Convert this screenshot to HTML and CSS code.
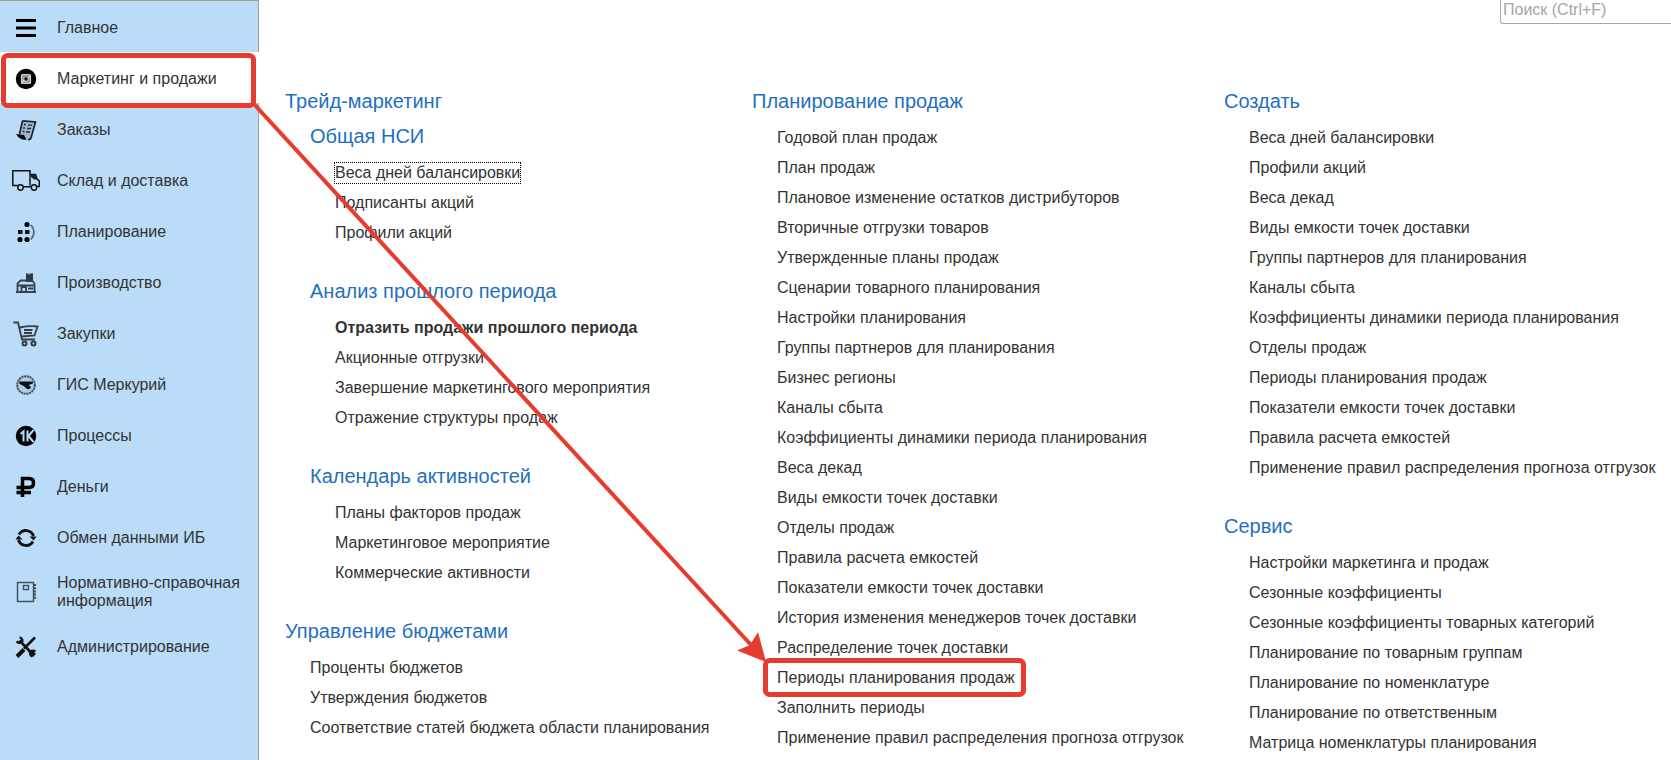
FILE: index.html
```html
<!DOCTYPE html>
<html lang="ru">
<head>
<meta charset="utf-8">
<title>Маркетинг и продажи</title>
<link rel="stylesheet" href="styles.css">
</head>
<body>
<div class="app">
  <nav class="sidebar" aria-label="Разделы">
    <a class="section" href="#"><svg class="icon" viewBox="0 0 28 28"><path d="M4 6.500h20M4 14h20M4 21.500h20" stroke="#000" stroke-width="3"/></svg><span>Главное</span></a>
    <a class="section section-active" href="#" aria-current="page"><svg class="icon" viewBox="0 0 28 28"><circle cx="14" cy="14" r="10.200" fill="#000"/><rect x="9.500" y="9.500" width="9" height="9" rx="1" fill="#999" stroke="#ccc" stroke-width="1.200"/><path d="M10 17.800l2-3 2 2 4-6" fill="none" stroke="#eee"/><circle cx="14" cy="14" r="1.700" fill="#111"/></svg><span>Маркетинг и продажи</span></a>
    <a class="section" href="#"><svg class="icon" viewBox="0 0 28 28"><path d="M10.500 5L23.500 6L18.500 23.500L14 23.500L5 19.500L8 17.500Z" fill="#9db7cc"/><path d="M10.500 4.800L23.500 6L19 22Q18 24 16 23.500M10.500 5L7.500 18" fill="none" stroke="#1a2229" stroke-width="1.700"/><path d="M4 18L12 19L14.500 23.800Q8 24.500 4 18Z" fill="#000"/><path d="M12 8.500h2M16 9.200h4M11 12h2M15 12.500h4M10.500 15.500h2M14 16h4" stroke="#202a33" stroke-width="1.300"/></svg><span>Заказы</span></a>
    <a class="section" href="#"><svg class="icon" viewBox="0 0 28 28"><path d="M5.500 18.500H.8V3.800H18V18.500M18 7.500H23.500L25 12L27.300 14V19.500H25M11 19.800H19" fill="none" stroke="#111" stroke-width="1.500"/><path d="M19 8h4.500l1.200 4.500h-2.700l-3-2.500z" fill="#222"/><circle cx="8.500" cy="20.500" r="2.700" fill="#badcf8" stroke="#111" stroke-width="1.500"/><circle cx="22" cy="20.500" r="2.700" fill="#badcf8" stroke="#111" stroke-width="1.500"/></svg><span>Склад и доставка</span></a>
    <a class="section" href="#"><svg class="icon" viewBox="0 0 28 28"><path d="M6 12h4.500v4H6zM13 12h4.500v4H13z" fill="#111"/><circle cx="15" cy="6.500" r="2.600"/><circle cx="8" cy="21.500" r="2.600"/><circle cx="15" cy="21.500" r="2.600"/><path d="M19 7Q25 14 19 21.500" fill="none" stroke="#566775" stroke-width="1.800"/></svg><span>Планирование</span></a>
    <a class="section" href="#"><svg class="icon" viewBox="0 0 28 28"><path d="M14 4.500h2.500v1h1v-1H21V13H14z" fill="#2c3945"/><path d="M5.500 23V14.500L8.500 11.500H20L22.500 14.500V23M4 23H24M5.500 16.500H22.500M9.500 23V18H14V23M16 19.500H21" fill="none" stroke="#33414e" stroke-width="1.800"/></svg><span>Производство</span></a>
    <a class="section" href="#"><svg class="icon" viewBox="0 0 28 28"><path d="M1.500 2.500H6L10 19.500H23M8 7.500Q17 5.500 25.500 6.500L22.500 15.500L9.500 16.500M12 10H20.500M12 13H20" fill="none" stroke="#343f49" stroke-width="1.800"/><circle cx="12.500" cy="23.500" r="2" fill="none" stroke="#303a43" stroke-width="2"/><circle cx="21.500" cy="23.500" r="2" fill="none" stroke="#303a43" stroke-width="2"/></svg><span>Закупки</span></a>
    <a class="section" href="#"><svg class="icon" viewBox="0 0 28 28"><circle cx="14" cy="14" r="8.800" fill="#b0cde5" stroke="#46545f" stroke-width="2" stroke-dasharray="2.200 .6"/><path d="M7 10.500H21L20.500 13Q17.500 12.500 17 15L19 15.500L18 18H15Q12 14.500 7.500 13Z" fill="#0b1116"/></svg><span>ГИС Меркурий</span></a>
    <a class="section" href="#"><svg class="icon" viewBox="0 0 28 28"><circle cx="14" cy="14" r="10.200" fill="#000"/><path d="M8.500 12L11.500 9.500V19.500M15.500 8.500V19.500M21.500 8L16.500 14L21.500 20" fill="none" stroke="#badcf8" stroke-width="2"/></svg><span>Процессы</span></a>
    <a class="section" href="#"><svg class="icon" viewBox="0 0 28 28"><path d="M10.500 24V5.500H17Q21.500 5.500 21.500 10T17 14.500H4.500M4.500 19.500H19" fill="none" stroke="#000" stroke-width="3.500"/></svg><span>Деньги</span></a>
    <a class="section" href="#"><svg class="icon" viewBox="0 0 28 28"><path d="M7 10.500A8 8 0 0 1 21.500 12M21 17.500A8 8 0 0 1 6.500 16" fill="none" stroke="#111" stroke-width="2.800"/><path d="M17.500 12.500H24.500L21.500 16.500ZM3.500 15.500H10.500L6.500 11.500Z" fill="#111"/></svg><span>Обмен данными ИБ</span></a>
    <a class="section" href="#"><svg class="icon" viewBox="0 0 28 28"><rect x="5.500" y="4.500" width="16" height="19" fill="none" stroke="#3f4c58" stroke-width="1.400"/><rect x="11.500" y="7.500" width="5" height="4" fill="none" stroke="#3f4c58" stroke-width="1.400"/><path d="M22.500 6V21" stroke="#3f4c58" stroke-width="3" stroke-dasharray="2 1.200"/></svg><span>Нормативно-справочная информация</span></a>
    <a class="section" href="#"><svg class="icon" viewBox="0 0 28 28"><path d="M7.500 7.500L19 19.500M12 15.500L23 4.500" stroke="#111" stroke-width="2.600"/><path d="M18 18L22.500 22.500M5 23.500L12 16.500" stroke="#111" stroke-width="4"/><path d="M4.500 8.500Q8.500 11.500 10.500 8Q10.500 5 7.500 4.500M23.500 18.500Q20 16.500 18 19.500Q18 23 20.500 23.500" fill="none" stroke="#111" stroke-width="2.200"/></svg><span>Администрирование</span></a>
  </nav>

  <main class="content">
    <form class="search">
      <input class="search-input" type="search" placeholder="Поиск (Ctrl+F)" aria-label="Поиск">
    </form>
    <div class="columns">
      <div class="column">
        <section class="group">
          <h2 class="title title-parent">Трейд-маркетинг</h2>
          <div class="subgroups">
            <section class="group">
              <h3 class="title">Общая НСИ</h3>
              <ul class="links">
                <li><a class="link link-focused" href="#">Веса дней балансировки</a></li>
                <li><a class="link" href="#">Подписанты акций</a></li>
                <li><a class="link" href="#">Профили акций</a></li>
              </ul>
            </section>
            <section class="group">
              <h3 class="title">Анализ прошлого периода</h3>
              <ul class="links">
                <li><a class="link link-strong" href="#">Отразить продажи прошлого периода</a></li>
                <li><a class="link" href="#">Акционные отгрузки</a></li>
                <li><a class="link" href="#">Завершение маркетингового мероприятия</a></li>
                <li><a class="link" href="#">Отражение структуры продаж</a></li>
              </ul>
            </section>
            <section class="group">
              <h3 class="title">Календарь активностей</h3>
              <ul class="links">
                <li><a class="link" href="#">Планы факторов продаж</a></li>
                <li><a class="link" href="#">Маркетинговое мероприятие</a></li>
                <li><a class="link" href="#">Коммерческие активности</a></li>
              </ul>
            </section>
          </div>
        </section>
        <section class="group">
          <h2 class="title">Управление бюджетами</h2>
          <ul class="links">
            <li><a class="link" href="#">Проценты бюджетов</a></li>
            <li><a class="link" href="#">Утверждения бюджетов</a></li>
            <li><a class="link" href="#">Соответствие статей бюджета области планирования</a></li>
          </ul>
        </section>
      </div>
      <div class="column">
        <section class="group">
          <h2 class="title">Планирование продаж</h2>
          <ul class="links">
            <li><a class="link" href="#">Годовой план продаж</a></li>
            <li><a class="link" href="#">План продаж</a></li>
            <li><a class="link" href="#">Плановое изменение остатков дистрибуторов</a></li>
            <li><a class="link" href="#">Вторичные отгрузки товаров</a></li>
            <li><a class="link" href="#">Утвержденные планы продаж</a></li>
            <li><a class="link" href="#">Сценарии товарного планирования</a></li>
            <li><a class="link" href="#">Настройки планирования</a></li>
            <li><a class="link" href="#">Группы партнеров для планирования</a></li>
            <li><a class="link" href="#">Бизнес регионы</a></li>
            <li><a class="link" href="#">Каналы сбыта</a></li>
            <li><a class="link" href="#">Коэффициенты динамики периода планирования</a></li>
            <li><a class="link" href="#">Веса декад</a></li>
            <li><a class="link" href="#">Виды емкости точек доставки</a></li>
            <li><a class="link" href="#">Отделы продаж</a></li>
            <li><a class="link" href="#">Правила расчета емкостей</a></li>
            <li><a class="link" href="#">Показатели емкости точек доставки</a></li>
            <li><a class="link" href="#">История изменения менеджеров точек доставки</a></li>
            <li><a class="link" href="#">Распределение точек доставки</a></li>
            <li><a class="link" href="#">Периоды планирования продаж</a></li>
            <li><a class="link" href="#">Заполнить периоды</a></li>
            <li><a class="link" href="#">Применение правил распределения прогноза отгрузок</a></li>
          </ul>
        </section>
      </div>
      <div class="column">
        <section class="group">
          <h2 class="title">Создать</h2>
          <ul class="links">
            <li><a class="link" href="#">Веса дней балансировки</a></li>
            <li><a class="link" href="#">Профили акций</a></li>
            <li><a class="link" href="#">Веса декад</a></li>
            <li><a class="link" href="#">Виды емкости точек доставки</a></li>
            <li><a class="link" href="#">Группы партнеров для планирования</a></li>
            <li><a class="link" href="#">Каналы сбыта</a></li>
            <li><a class="link" href="#">Коэффициенты динамики периода планирования</a></li>
            <li><a class="link" href="#">Отделы продаж</a></li>
            <li><a class="link" href="#">Периоды планирования продаж</a></li>
            <li><a class="link" href="#">Показатели емкости точек доставки</a></li>
            <li><a class="link" href="#">Правила расчета емкостей</a></li>
            <li><a class="link" href="#">Применение правил распределения прогноза отгрузок</a></li>
          </ul>
        </section>
        <section class="group">
          <h2 class="title">Сервис</h2>
          <ul class="links">
            <li><a class="link" href="#">Настройки маркетинга и продаж</a></li>
            <li><a class="link" href="#">Сезонные коэффициенты</a></li>
            <li><a class="link" href="#">Сезонные коэффициенты товарных категорий</a></li>
            <li><a class="link" href="#">Планирование по товарным группам</a></li>
            <li><a class="link" href="#">Планирование по номенклатуре</a></li>
            <li><a class="link" href="#">Планирование по ответственным</a></li>
            <li><a class="link" href="#">Матрица номенклатуры планирования</a></li>
          </ul>
        </section>
      </div>
    </div>
  </main>

  <svg class="annotation" width="1040" height="700" viewBox="0 0 1040 700" aria-hidden="true">
    <g fill="none" stroke="#e63c2f" stroke-width="5">
      <rect x="3.500" y="55.500" width="250" height="50" rx="4"/>
      <rect x="765.500" y="660.500" width="258" height="34" rx="4"/>
      <path d="M254 104L752 646" stroke-width="4"/>
    </g>
    <path d="M766 662L737 650.500L750 645L758 632Z" fill="#e63c2f"/>
  </svg>
</div>
</body>
</html>
```
FILE: styles.css
```css
* {
  box-sizing: border-box;
}

body {
  margin: 0;
  background: #fff;
  color: #333;
  font: 16px/18px "Liberation Sans", Arial, sans-serif;
}

.app {
  position: relative;
  display: flex;
  min-height: 100vh;
  overflow: hidden;
}

.sidebar {
  flex: none;
  width: 259px;
  border-top: 1px solid #a0a0a0;
  border-right: 1px solid #a0a0a0;
  background: #badcf8;
}

.section {
  display: flex;
  align-items: center;
  gap: 17px;
  min-height: 51px;
  padding: 12px 12px 10px;
  color: #333;
  text-decoration: none;
}

.section-active {
  margin-right: -1px;
  background: #fff;
}

.icon {
  flex: none;
  width: 28px;
  height: 28px;
}

.content {
  flex: 1;
  min-width: 0;
}

.search {
  display: flex;
  justify-content: flex-end;
}

.search-input {
  width: 171px;
  height: 24px;
  padding: 0 2px 4px;
  border: solid #a8a8a8;
  border-width: 0 0 1px 1px;
  border-radius: 0 0 0 3px;
  background: #fff;
  font: inherit;
  appearance: none;
}

.search-input::placeholder {
  color: #a6a6a6;
}

.columns {
  display: grid;
  grid-template-columns: 467fr 472fr 447fr;
  padding: 62px 0 0 26px;
}

.column,
.subgroups {
  display: flex;
  flex-direction: column;
  gap: 28px;
}

.subgroups {
  padding-left: 25px;
}

.title {
  margin: 0 0 7px;
  color: #1f6fbf;
  font-size: 20px;
  font-weight: 400;
  line-height: 30px;
}

.title-parent {
  margin-bottom: 5px;
}

.links {
  margin: 0;
  padding: 0 0 0 25px;
  list-style: none;
}

.links li {
  display: flex;
  align-items: center;
  height: 30px;
}

.link {
  color: #333;
  line-height: 20px;
  text-decoration: none;
}

.link-focused {
  outline: 1px dotted #000;
}

.link-strong {
  font-weight: 700;
}

.annotation {
  position: absolute;
  top: 0;
  left: 0;
  pointer-events: none;
}
```
